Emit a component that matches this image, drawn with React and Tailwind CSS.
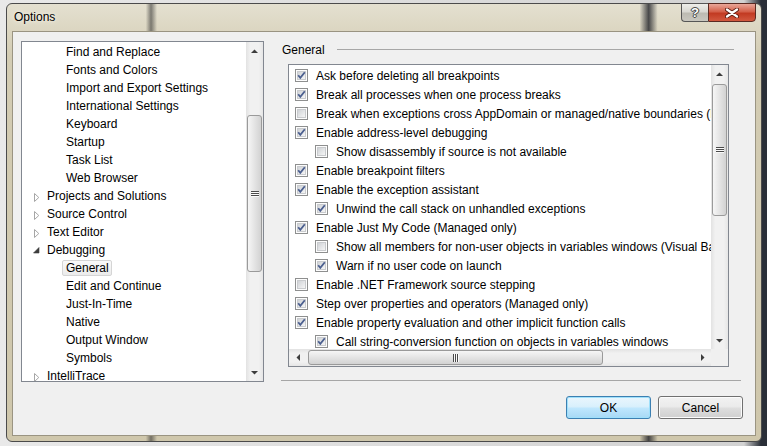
import React from 'react';

const Check = ({ checked }) => (
  <svg width="13" height="13" viewBox="0 0 13 13" className="shrink-0">
    <defs>
      <linearGradient id="cbg" x1="0" y1="0" x2="1" y2="1">
        <stop offset="0" stopColor="#cdd0d4" />
        <stop offset="1" stopColor="#f8f8f8" />
      </linearGradient>
    </defs>
    <rect x="0.5" y="0.5" width="12" height="12" fill="#fdfdfd" stroke="#8e8f8f" />
    <rect x="2.5" y="2.5" width="8" height="8" fill="url(#cbg)" stroke="#c9cbce" />
    {checked && (
      <path d="M3.2 6.3 L5.3 8.9 L9.8 3.2" fill="none" stroke="#4b5f8f" strokeWidth="1.8" />
    )}
  </svg>
);

const Arrow = ({ dir }) => {
  const vert = dir === 'up' || dir === 'down';
  const d = {
    up: 'M0 4 L3.5 0.5 L7 4Z',
    down: 'M0 0 L7 0 L3.5 3.5Z',
    left: 'M4 0 L4 7 L0.5 3.5Z',
    right: 'M0 0 L3.5 3.5 L0 7Z',
  }[dir];
  return (
    <div className="w-[17px] h-[17px] shrink-0 flex items-center justify-center">
      <svg width={vert ? 7 : 4} height={vert ? 4 : 7}>
        <path d={d} fill="#3d3d3d" />
      </svg>
    </div>
  );
};

const VGrip = () => (
  <svg width="8" height="6">
    <path d="M0 0.5H8M0 2.5H8M0 4.5H8" stroke="#4a4a4a" />
    <path d="M0 1.5H8M0 3.5H8M0 5.5H8" stroke="#fafafa" />
  </svg>
);

const HGrip = () => (
  <svg width="6" height="8">
    <path d="M0.5 0V8M2.5 0V8M4.5 0V8" stroke="#4a4a4a" />
    <path d="M1.5 0V8M3.5 0V8M5.5 0V8" stroke="#fafafa" />
  </svg>
);

const CollapsedArrow = () => (
  <svg width="6" height="9" className="mt-[2px]">
    <path d="M0.5 0.5 L4.8 4.5 L0.5 8.5Z" fill="#fff" stroke="#a6a6a6" />
  </svg>
);

const ExpandedArrow = () => (
  <svg width="7" height="7" className="-ml-[1px]">
    <path d="M6 0.5 L6 6 L0.5 6Z" fill="#3c3c3c" stroke="#3c3c3c" strokeWidth="0.6" />
  </svg>
);

const tree = [
  { t: 'Find and Replace', l: 2 },
  { t: 'Fonts and Colors', l: 2 },
  { t: 'Import and Export Settings', l: 2 },
  { t: 'International Settings', l: 2 },
  { t: 'Keyboard', l: 2 },
  { t: 'Startup', l: 2 },
  { t: 'Task List', l: 2 },
  { t: 'Web Browser', l: 2 },
  { t: 'Projects and Solutions', l: 1, a: 'c' },
  { t: 'Source Control', l: 1, a: 'c' },
  { t: 'Text Editor', l: 1, a: 'c' },
  { t: 'Debugging', l: 1, a: 'e' },
  { t: 'General', l: 2, sel: true },
  { t: 'Edit and Continue', l: 2 },
  { t: 'Just-In-Time', l: 2 },
  { t: 'Native', l: 2 },
  { t: 'Output Window', l: 2 },
  { t: 'Symbols', l: 2 },
  { t: 'IntelliTrace', l: 1, a: 'c' },
];

const opts = [
  { t: 'Ask before deleting all breakpoints', c: true, l: 0 },
  { t: 'Break all processes when one process breaks', c: true, l: 0 },
  { t: 'Break when exceptions cross AppDomain or managed/native boundaries (Managed only)', c: false, l: 0 },
  { t: 'Enable address-level debugging', c: true, l: 0 },
  { t: 'Show disassembly if source is not available', c: false, l: 1 },
  { t: 'Enable breakpoint filters', c: true, l: 0 },
  { t: 'Enable the exception assistant', c: true, l: 0 },
  { t: 'Unwind the call stack on unhandled exceptions', c: true, l: 1 },
  { t: 'Enable Just My Code (Managed only)', c: true, l: 0 },
  { t: 'Show all members for non-user objects in variables windows (Visual Basic only)', c: false, l: 1 },
  { t: 'Warn if no user code on launch', c: true, l: 1 },
  { t: 'Enable .NET Framework source stepping', c: false, l: 0 },
  { t: 'Step over properties and operators (Managed only)', c: true, l: 0 },
  { t: 'Enable property evaluation and other implicit function calls', c: true, l: 0 },
  { t: 'Call string-conversion function on objects in variables windows', c: true, l: 1 },
];

const vTrack = 'w-[17px] shrink-0 flex flex-col bg-[linear-gradient(90deg,#e2e2e2,#f1f1f1_25%,#f1f1f1_75%,#e6e6e6)]';
const vThumb = 'mx-[1px] rounded-[3px] border border-[#9a9a9a] bg-[linear-gradient(90deg,#f6f6f6,#e6e6e6_45%,#d2d2d2)] flex items-center justify-center shrink-0';
const hThumb = 'my-[1px] rounded-[3px] border border-[#9a9a9a] bg-[linear-gradient(180deg,#f6f6f6,#e6e6e6_45%,#d2d2d2)] flex items-center justify-center shrink-0';

export default function App() {
  return (
    <div className="w-[767px] h-[446px] overflow-hidden bg-[linear-gradient(90deg,#e9e9e9,#d2d2d2_97%,#2a2f38_99.2%)] pt-[3px] pl-[6px] font-['Liberation_Sans',Arial,sans-serif] text-[12px] text-black">
      <div className="w-[756px] h-[439px] rounded-[6px] border border-[#4b4b4b] flex flex-col bg-[linear-gradient(90deg,transparent_18.4%,rgba(40,40,40,0.55)_19.1%,transparent_19.9%,transparent_83.9%,rgba(20,22,30,0.75)_85.1%,transparent_86.3%),linear-gradient(180deg,#e4e0d0,#d3ccb3_12%,#cfc7ac)]">
        <div className="h-[27px] shrink-0 flex items-start">
          <span className="ml-[7px] mt-[5px] leading-[16px] [text-shadow:0_0_6px_#f4f1e6,0_0_3px_#f4f1e6]">Options</span>
          <div className="ml-auto mr-[5px] -mt-px flex">
            <div className="w-[27px] h-[19px] rounded-bl-[4px] border border-[#565656] border-r-0 bg-[linear-gradient(180deg,#eeeeea,#d9d8d2_45%,#bdbbb2_55%,#c9c7bf)] flex items-center justify-center">
              <span className="text-[13px] font-bold leading-none text-white [text-shadow:0_0_1px_#333,0_0_1px_#333,1px_0_0_#555,-1px_0_0_#555,0_1px_0_#555,0_-1px_0_#555]">?</span>
            </div>
            <div className="w-[48px] h-[19px] rounded-br-[4px] border border-[#5a2a22] bg-[linear-gradient(180deg,#e9a799,#d4604a_45%,#c23a22_55%,#d2583f)] flex items-center justify-center">
              <svg width="14" height="10" viewBox="0 0 14 10">
                <path d="M2 1.5 L12 8.5 M12 1.5 L2 8.5" stroke="#5b1d12" strokeWidth="4" strokeLinecap="round" />
                <path d="M2 1.5 L12 8.5 M12 1.5 L2 8.5" stroke="#ffffff" strokeWidth="2.2" strokeLinecap="round" />
              </svg>
            </div>
          </div>
        </div>
        <div className="mx-[5px] h-[405px] shrink-0 border border-[#9a9482] bg-[#f0f0f0] flex flex-col px-[8px] pt-[9px]">
          <div className="flex h-[341px] shrink-0">
            {/* Tree */}
            <div className="w-[243px] h-[341px] shrink-0 border border-[#828790] bg-white flex">
              <div className="flex-1 overflow-hidden pt-[1px]">
                {tree.map((it, i) => (
                  <div key={i} className={`h-[18px] flex items-center whitespace-nowrap ${it.l === 1 ? 'pl-[12px]' : 'pl-[40px]'}`}>
                    {it.l === 1 && (
                      <span className="w-[9px] shrink-0 flex items-center">
                        {it.a === 'e' ? <ExpandedArrow /> : <CollapsedArrow />}
                      </span>
                    )}
                    <span
                      className={`h-[16px] leading-[14px] pl-[3px] pr-[2px] border rounded-[2px] ${
                        it.sel
                          ? 'border-[#d5d5d5] bg-[linear-gradient(180deg,#fafafa,#ebebeb)]'
                          : 'border-transparent'
                      }`}
                    >
                      {it.t}
                    </span>
                  </div>
                ))}
              </div>
              <div className={vTrack}>
                <Arrow dir="up" />
                <div className="h-[56px] shrink-0" />
                <div className={`${vThumb} h-[157px]`}>
                  <VGrip />
                </div>
                <div className="flex-1" />
                <Arrow dir="down" />
              </div>
            </div>
            {/* Right panel */}
            <div className="ml-[17px] w-[460px] h-[340px] shrink-0 flex flex-col border-b border-[#a6a6a6]">
              <div className="h-[17px] shrink-0 flex items-center">
                <span className="pl-[1px] leading-[14px]">General</span>
                <div className="flex-1 ml-[12px] mr-[7px] h-0 border-t border-[#a7a7a7]" />
              </div>
              <div className="ml-[7px] mt-[6px] w-[441px] h-[303px] shrink-0 border border-[#828790] bg-white flex flex-col">
                <div className="flex h-[284px] shrink-0">
                  <div className="flex-1 overflow-hidden pt-[1px]">
                    {opts.map((o, i) => (
                      <div key={i} className={`h-[19px] flex items-center gap-[8px] whitespace-nowrap ${o.l === 1 ? 'pl-[26px]' : 'pl-[6px]'}`}>
                        <Check checked={o.c} />
                        <span className="leading-[14px]">{o.t}</span>
                      </div>
                    ))}
                  </div>
                  <div className={vTrack}>
                    <Arrow dir="up" />
                    <div className={`${vThumb} mt-[2px] h-[132px]`}>
                      <VGrip />
                    </div>
                    <div className="flex-1" />
                    <Arrow dir="down" />
                  </div>
                </div>
                <div className="flex h-[17px] shrink-0">
                  <div className="flex-1 flex bg-[linear-gradient(180deg,#e2e2e2,#f1f1f1_25%,#f1f1f1_75%,#e6e6e6)]">
                    <Arrow dir="left" />
                    <div className={`${hThumb} ml-[2px] w-[295px]`}>
                      <HGrip />
                    </div>
                    <div className="flex-1" />
                    <Arrow dir="right" />
                  </div>
                  <div className="w-[17px] shrink-0 bg-[#f0f0f0]" />
                </div>
              </div>
            </div>
          </div>
          <div className="mt-[14px] flex justify-end gap-[7px] pr-[4px]">
            <button className="w-[85px] h-[23px] rounded-[3px] border border-[#3c7fb1] bg-[linear-gradient(180deg,#eaf6fd,#d9f0fc_45%,#bee6fd_55%,#a7d9f5)] shadow-[inset_0_0_0_1px_#9fe0fb] leading-[14px]">
              OK
            </button>
            <button className="w-[85px] h-[23px] rounded-[3px] border border-[#707070] bg-[linear-gradient(180deg,#f2f2f2,#ebebeb_45%,#dddddd_55%,#cfcfcf)] shadow-[inset_0_0_0_1px_#fcfcfc] leading-[14px]">
              Cancel
            </button>
          </div>
        </div>
      </div>
    </div>
  );
}
